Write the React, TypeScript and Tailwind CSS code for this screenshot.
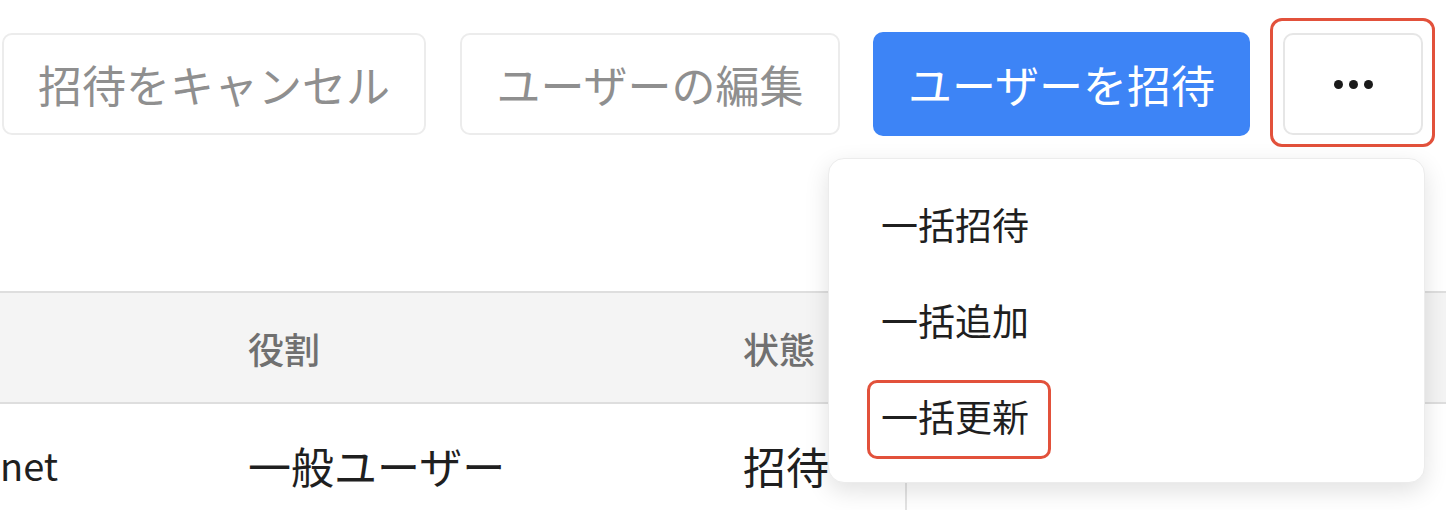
const font = { fontFamily: '"Noto Sans CJK JP", "Noto Sans", sans-serif' };

const menuItems = ["一括招待", "一括追加", "一括更新"];

export default function App() {
  return (
    <div className="relative h-[510px] w-[1446px] overflow-hidden bg-white" style={font}>
      {/* toolbar */}
      <div className="flex items-center gap-[33px] pl-[2px] pt-[32px]">
        <button className="flex h-[102px] w-[424px] items-center justify-center rounded-[10px] border-2 border-[#ececec] bg-white text-[44px] leading-none text-[#8f8f8f]">
          招待をキャンセル
        </button>
        <button className="ml-[1px] flex h-[102px] w-[380px] items-center justify-center rounded-[10px] border-2 border-[#ececec] bg-white text-[44px] leading-none text-[#8f8f8f]">
          ユーザーの編集
        </button>
        <button className="flex h-[104px] w-[377px] items-center justify-center rounded-[10px] bg-[#3d84f6] text-[44px] leading-none text-white">
          ユーザーを招待
        </button>
        <div className="relative">
          <button className="flex h-[102px] w-[140px] items-center justify-center gap-[6px] rounded-[10px] border-2 border-[#e6e6e6] bg-white">
            <span className="h-[9px] w-[9px] rounded-full bg-[#1a1a1a]" />
            <span className="h-[9px] w-[9px] rounded-full bg-[#1a1a1a]" />
            <span className="h-[9px] w-[9px] rounded-full bg-[#1a1a1a]" />
          </button>
          <span className="pointer-events-none absolute -top-[15px] -bottom-[12px] -left-[13px] -right-[12px] rounded-[12px] border-[3px] border-[#e2513b]" />
        </div>
      </div>

      {/* table */}
      <div className="mt-[155px]">
        <div className="grid h-[113px] grid-cols-[248px_495px_162px_1fr] items-center border-y-2 border-[#dedede] bg-[#f4f4f4] text-[36px] font-medium leading-none text-[#707070]">
          <div />
          <div>役割</div>
          <div>状態</div>
          <div />
        </div>
        <div className="grid h-[110px] grid-cols-[248px_495px_162px_1fr] leading-none text-[#1f1f1f]">
          <div className="flex items-center pt-[12px] text-[38px]">net</div>
          <div className="flex items-center pt-[12px] text-[43px]">一般ユーザー</div>
          <div className="flex items-center pt-[12px] text-[43px]">招待</div>
          <div className="border-l-2 border-[#e3e3e3]" />
        </div>
      </div>

      {/* dropdown menu */}
      <div className="absolute left-[828px] top-[158px] flex h-[325px] w-[597px] flex-col rounded-[16px] border border-[#ececec] bg-white py-[17px] shadow-[0_8px_24px_rgba(0,0,0,0.12)]">
        {menuItems.map((label, i) => (
          <div key={label} className="flex h-[99px] items-center pl-[52px]">
            <span className="relative text-[37px] leading-none text-[#1f1f1f]">
              {label}
              {i === 2 && (
                <span className="pointer-events-none absolute -top-[18px] -bottom-[24px] -left-[14px] -right-[22px] rounded-[10px] border-[3px] border-[#e2513b]" />
              )}
            </span>
          </div>
        ))}
      </div>
    </div>
  );
}
